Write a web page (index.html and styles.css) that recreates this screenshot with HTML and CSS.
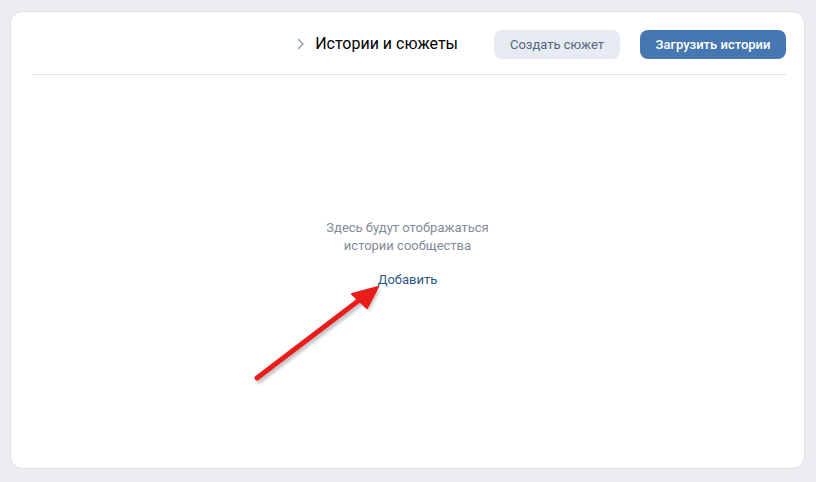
FILE: index.html
```html
<!DOCTYPE html>
<html lang="ru">
<head>
<meta charset="utf-8">
<title>Истории и сюжеты</title>
<link rel="stylesheet" href="styles.css">
</head>
<body>
<div class="card">
  <div class="header">
    <div class="title">
      <svg class="chev" width="8" height="12" viewBox="0 0 8 12"><path d="M1.5 1.5 L6 6 L1.5 10.5" fill="none" stroke="#8a96a3" stroke-width="1.4" stroke-linecap="round" stroke-linejoin="round"/></svg>
      <span>Истории и сюжеты</span>
    </div>
    <button class="btn btn-secondary">Создать сюжет</button>
    <button class="btn btn-primary">Загрузить истории</button>
  </div>
  <div class="body">
    <div class="empty">
      <p class="empty-text">Здесь будут отображаться<br>истории сообщества</p>
      <a class="empty-link" href="#">Добавить</a>
    </div>
    <svg class="arrow" width="816" height="482" viewBox="0 0 816 482">
      <defs>
        <filter id="sh" x="-20%" y="-20%" width="140%" height="140%">
          <feGaussianBlur stdDeviation="1.5"/>
        </filter>
      </defs>
      <g transform="translate(2,3)" opacity="0.35" filter="url(#sh)">
        <line x1="257" y1="378" x2="362" y2="298" stroke="#555" stroke-width="5" stroke-linecap="round"/>
        <polygon points="378,287 352,294 367,308" fill="#555"/>
      </g>
      <line x1="257" y1="378" x2="362" y2="298" stroke="#ea1c1c" stroke-width="5" stroke-linecap="round"/>
      <polygon points="378,287 352,294 367,308" fill="#ea1c1c" stroke="#ea1c1c" stroke-width="2" stroke-linejoin="round"/>
    </svg>
  </div>
</div>
</body>
</html>
```

FILE: styles.css
```css
* { box-sizing: border-box; }
html, body { margin: 0; padding: 0; }
body {
  background: #ebedf0;
  font-family: Roboto, "Noto Sans", "Liberation Sans", sans-serif;
  padding: 11px 11px 13px 10px;
  height: 482px;
}
.card {
  position: relative;
  background: #fff;
  border: 1px solid #dce1e6;
  border-radius: 12px;
  height: 458px;
  width: 795px;
  display: flex;
  flex-direction: column;
}
.header {
  margin: 0 18px 0 21px;
  height: 63px;
  border-bottom: 1px solid #e1e3e6;
  display: flex;
  align-items: center;
  justify-content: flex-end;
}
.title {
  display: flex;
  align-items: center;
  gap: 10px;
  font-size: 16px;
  color: #000;
  margin-right: 36px;
  padding-top: 1px;
}
.chev { display: block; }
.btn {
  font-family: inherit;
  font-size: 13px;
  border: none;
  border-radius: 8px;
  height: 29px;
  padding: 0;
  margin-top: 2px;
  white-space: nowrap;
  cursor: pointer;
}
.btn-secondary {
  background: #e5ebf1;
  color: #55677d;
  width: 126px;
  margin-right: 20px;
}
.btn-primary {
  background: #4677b0;
  color: #fff;
  font-weight: 500;
  width: 146px;
}
.body {
  flex: 1;
  display: flex;
  justify-content: center;
}
.empty {
  margin-top: 144px;
  text-align: center;
}
.empty-text {
  margin: 0;
  font-size: 13px;
  line-height: 18px;
  color: #818c99;
}
.empty-link {
  display: inline-block;
  margin-top: 16px;
  font-size: 13px;
  line-height: 18px;
  color: #2a5885;
  text-decoration: none;
}
.arrow {
  position: absolute;
  left: -11px;
  top: -12px;
  pointer-events: none;
}
```
